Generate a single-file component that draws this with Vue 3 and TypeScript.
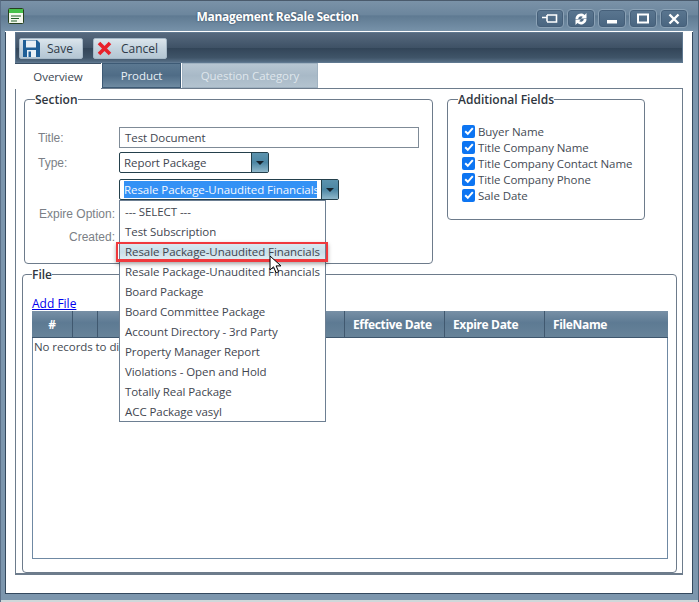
<script setup lang="ts">
const options: string[] = [
  '--- SELECT ---',
  'Test Subscription',
  'Resale Package-Unaudited Financials',
  'Resale Package-Unaudited Financials',
  'Board Package',
  'Board Committee Package',
  'Account Directory - 3rd Party',
  'Property Manager Report',
  'Violations - Open and Hold',
  'Totally Real Package',
  'ACC Package vasyl',
]
const fields: string[] = ['Buyer Name', 'Title Company Name', 'Title Company Contact Name', 'Title Company Phone', 'Sale Date']
const columns: { label: string; width: number }[] = [
  { label: '#', width: 41 },
  { label: '', width: 25 },
  { label: '', width: 247 },
  { label: 'Effective Date', width: 100 },
  { label: 'Expire Date', width: 100 },
  { label: 'FileName', width: 123 },
]
</script>

<template>
  <div class="window">
    <header class="titlebar">
      <svg class="app-icon" width="16" height="16" viewBox="0 0 16 16">
        <rect x="0.5" y="0.5" width="15" height="15" rx="1" fill="#f4f8ee" stroke="#26401f" />
        <rect x="1" y="1" width="14" height="4" fill="#46c04a" />
        <path d="M3 8h10M3 10.5h8M3 13h6" stroke="#23602a" stroke-width="1" />
      </svg>
      <div class="win-title">Management ReSale Section</div>
      <div class="win-buttons">
        <button class="win-btn">
          <svg width="16" height="12" viewBox="0 0 16 12"><path d="M0 4.5h5M5 2v6.5M5 2h9.5v7H5" fill="none" stroke="#fff" stroke-width="1.6" /></svg>
        </button>
        <button class="win-btn">
          <svg width="14" height="14" viewBox="0 0 14 14"><path d="M1.5 7A5.5 5.5 0 0 1 10.6 2.9L12.5 1v5.5H7l1.8-1.8A3 3 0 0 0 4.2 7zM12.5 7A5.5 5.5 0 0 1 3.4 11.1L1.5 13V7.5H7L5.2 9.3A3 3 0 0 0 9.8 7z" fill="#fff" /></svg>
        </button>
        <button class="win-btn">
          <svg width="12" height="12" viewBox="0 0 12 12"><rect x="1" y="7" width="10" height="3.5" fill="#fff" /></svg>
        </button>
        <button class="win-btn">
          <svg width="12" height="12" viewBox="0 0 12 12"><rect x="1" y="1.5" width="10" height="8" fill="none" stroke="#fff" stroke-width="2" /></svg>
        </button>
        <button class="win-btn">
          <svg width="12" height="12" viewBox="0 0 12 12"><path d="M1.5 1.5l9 9M10.5 1.5l-9 9" stroke="#fff" stroke-width="2.4" /></svg>
        </button>
      </div>
    </header>

    <div class="frame">
      <div class="toolbar">
        <button class="tool-btn save">
          <svg width="17" height="17" viewBox="0 0 17 17">
            <path d="M0 0h14l3 3v14H0z" fill="#1f5f97" />
            <rect x="3" y="0.5" width="10" height="7" fill="#e8f0f6" />
            <rect x="4" y="10" width="9" height="7" fill="#e8f0f6" />
            <rect x="5.5" y="11.5" width="2.5" height="5.5" fill="#1f5f97" />
          </svg>
          <span>Save</span>
        </button>
        <button class="tool-btn cancel">
          <svg width="15" height="15" viewBox="0 0 15 15"><path d="M2 2l11 11M13 2L2 13" stroke="#e8202a" stroke-width="3.6" /></svg>
          <span>Cancel</span>
        </button>
      </div>

      <nav class="tabs">
        <div class="tab active">Overview</div>
        <div class="tab dark">Product</div>
        <div class="tab muted">Question Category</div>
      </nav>

      <main class="pane">
        <div class="top-row">
          <fieldset class="group section">
            <legend>Section</legend>
            <div class="form">
              <div class="row r-title">
                <label class="lbl">Title:</label>
                <div class="text-input">Test Document</div>
              </div>
              <div class="row r-type">
                <label class="lbl">Type:</label>
                <div class="combo type-combo">
                  <span class="combo-text">Report Package</span>
                  <span class="combo-btn"><i></i></span>
                </div>
              </div>
              <div class="row r-sub">
                <span class="lbl"></span>
                <div class="combo sub-combo">
                  <span class="combo-text"><span class="selected">Resale Package-Unaudited Financials</span></span>
                  <span class="combo-btn"><i></i></span>
                </div>
              </div>
              <div class="row r-expire"><label class="lbl right">Expire Option:</label></div>
              <div class="row r-created"><label class="lbl right">Created:</label></div>
            </div>
          </fieldset>

          <fieldset class="group additional">
            <legend>Additional Fields</legend>
            <div class="checks">
              <label v-for="f in fields" :key="f" class="check">
                <span class="box">
                  <svg width="12" height="12" viewBox="0 0 12 12"><path d="M2.2 6.2l2.6 2.6 5-5.6" fill="none" stroke="#fff" stroke-width="2" /></svg>
                </span>
                <span>{{ f }}</span>
              </label>
            </div>
          </fieldset>
        </div>

        <fieldset class="group file">
          <legend>File</legend>
          <a class="add-file" href="#">Add File</a>
          <div class="grid">
            <div class="grid-head">
              <div v-for="(c, i) in columns" :key="i" class="th" :class="{ center: c.label === '#' }" :style="{ width: c.width + 'px' }">{{ c.label }}</div>
            </div>
            <div class="empty">No records to display.</div>
          </div>
        </fieldset>
      </main>

      <ul class="dropdown">
        <li v-for="(o, i) in options" :key="i" :class="{ hover: i === 2 }">{{ o }}</li>
      </ul>
      <div class="callout"></div>
      <svg class="cursor" width="15" height="19" viewBox="0 0 15 19">
        <path d="M1 1v14l3.5-3.2 2.6 6 2.6-1.1-2.6-5.8H12z" fill="#fff" stroke="#000" stroke-width="1" />
      </svg>
    </div>
    <div class="strip"></div>
  </div>
</template>

<style>
html, body { margin: 0; padding: 0; background: #7c96ad; overflow: hidden; }
</style>

<style scoped>
* { box-sizing: border-box; }
.window {
  width: 699px;
  height: 602px;
  display: flex;
  flex-direction: column;
  font-family: "Open Sans", "Noto Sans", sans-serif;
  font-size: 11.5px;
  letter-spacing: -0.07px;
  color: #3f4650;
  background: #7c96ad;
  border-top: 1px solid #4a5a6c;
  border-left: 1px solid #5b7088;
  border-right: 1px solid #4d6278;
}
.titlebar {
  height: 30px;
  flex: none;
  position: relative;
  display: flex;
  align-items: center;
  justify-content: center;
  padding-right: 144px;
  background: linear-gradient(#7a92a8 0, #6c869d 45%, #5f7a92 50%, #7792a9 100%);
}
.app-icon { position: absolute; left: 7px; top: 7px; }
.win-title {
  font-weight: 700;
  font-size: 12px;
  letter-spacing: -0.3px;
  color: #fff;
  text-shadow: 0 0 2px #33465a;
}
.win-buttons {
  position: absolute;
  right: 10px;
  top: 8px;
  display: flex;
  gap: 3px;
}
.win-btn {
  width: 28px;
  height: 19px;
  padding: 0;
  display: flex;
  align-items: center;
  justify-content: center;
  border: 1px solid #8ba2b6;
  border-radius: 4px;
  background: linear-gradient(#5a7690, #496580);
  box-shadow: inset 0 0 0 1px #46607a;
}
.frame {
  position: relative;
  flex: none;
  height: 563px;
  margin: 0 5px 0 4px;
  background: #fff;
  border-top: 1px solid #fff;
  border-bottom: 1px solid #34495e;
  padding: 0 10px;
  display: flex;
  flex-direction: column;
  box-shadow: inset 1px 0 0 #34495e, inset -1px 0 0 #34495e;
}
.strip { flex: 1; border-bottom: 2px solid #cfd8da; }
.toolbar {
  height: 31px;
  flex: none;
  display: flex;
  align-items: center;
  gap: 10px;
  padding: 1px 3px 0;
  border: 1px solid #5f7890;
  background: linear-gradient(#56697e 0, #3f5266 50%, #324558 52%, #3f5468 85%, #566e85 100%);
}
.tool-btn {
  height: 21px;
  display: flex;
  align-items: center;
  padding: 0 5px 0 3px;
  border: 1px solid #a5b8c7;
  border-radius: 2px;
  background: linear-gradient(#dbe5ec, #c4d3de 50%, #b4c6d3);
  font-family: inherit;
  font-size: 12px;
  color: #2e3a48;
}
.save { width: 64px; gap: 7px; }
.cancel { width: 74px; gap: 9px; }
.tabs {
  height: 26px;
  flex: none;
  display: flex;
  align-items: flex-end;
  gap: 1px;
  border-bottom: 1px solid #6d7c8c;
}
.tab {
  height: 25px;
  display: flex;
  align-items: center;
  justify-content: center;
}
.tab.active {
  width: 86px;
  height: 26px;
  background: #fff;
  margin-bottom: -1px;
  border-top: 1px solid #3d5166;
  color: #3a4652;
}
.tab.dark {
  width: 79px;
  color: #eaf0f5;
  border: 1px solid #3d5a75;
  background: linear-gradient(#5b7891, #4f6c86 50%, #6f8ba2);
}
.tab.muted {
  width: 136px;
  color: #dfe6ec;
  border: 1px solid #a0b2c1;
  background: linear-gradient(#b7c6d2, #a8b9c7 50%, #b3c3cf);
}
.pane {
  flex: 1;
  padding: 2px 5px 0 6px;
  display: flex;
  flex-direction: column;
  border-left: 1px solid #6d7c8c;
  border-right: 1px solid #6d7c8c;
  border-bottom: 2px solid #6d7c8c;
  margin-bottom: 19px;
}
.top-row { display: flex; align-items: flex-start; }
.group {
  margin: 0;
  padding: 0;
  min-width: 0;
  border: 1px solid #6d7b8b;
  border-radius: 4px;
}
.group legend {
  margin-left: 10px;
  padding: 0;
  font-weight: 600;
  font-size: 12px;
  letter-spacing: 0;
  line-height: 17px;
  color: #2f3640;
}
.section { width: 409px; height: 173px; margin-left: 2px; }
.additional { width: 198px; height: 129px; margin-left: 14px; }
.form { padding: 19px 13px 0 13px; }
.row { display: flex; align-items: center; }
.lbl {
  width: 81px;
  flex: none;
  font-family: "Liberation Sans", sans-serif;
  font-size: 12px;
  letter-spacing: 0;
  color: #7b7f86;
}
.lbl.right { width: 77px; text-align: right; }
.r-title { height: 21px; }
.r-type { height: 21px; margin-top: 4px; }
.r-sub { height: 21px; margin-top: 6px; }
.r-expire { height: 20px; margin-top: 4px; }
.r-created { height: 20px; margin-top: 3px; }
.text-input {
  width: 300px;
  height: 21px;
  line-height: 19px;
  padding-left: 5px;
  border: 1px solid #7f8b97;
}
.combo {
  height: 21px;
  display: flex;
  border: 1px solid #24404c;
  border-radius: 2px;
}
.type-combo { width: 150px; }
.sub-combo { width: 220px; }
.combo-text {
  flex: 1;
  min-width: 0;
  padding-left: 4px;
  line-height: 19px;
  white-space: nowrap;
  overflow: hidden;
}
.selected {
  display: block;
  width: 193px;
  margin-top: 1px;
  line-height: 17px;
  overflow: hidden;
  background: #3391f5;
  color: #f4f8ff;
}
.combo-btn {
  width: 17px;
  flex: none;
  display: flex;
  align-items: center;
  justify-content: center;
  border-left: 1px solid #24404c;
  background: linear-gradient(#5c93ae, #4c86a3 50%, #8fb8cb);
}
.combo-btn i {
  width: 0;
  height: 0;
  border-left: 4px solid transparent;
  border-right: 4px solid transparent;
  border-top: 4px solid #17242e;
}
.checks {
  padding: 15px 0 0 14px;
  display: flex;
  flex-direction: column;
}
.check { display: flex; align-items: center; height: 16px; gap: 3px; color: #454b55; }
.box {
  width: 13px;
  height: 13px;
  border-radius: 2px;
  background: #0d75f2;
  display: flex;
  align-items: center;
  justify-content: center;
}
.file {
  width: 655px;
  height: 307px;
  margin-top: 2px;
  position: relative;
  padding: 0 9px;
}
.file legend { margin-left: 0; }
.add-file {
  display: block;
  height: 15px;
  margin-top: 13px;
  line-height: 15px;
  color: #0000ee;
  text-decoration: underline;
  font-size: 12px;
  letter-spacing: 0;
}
.grid {
  height: 248px;
  width: 636px;
  border: 1px solid #6f89a3;
  border-top: none;
}
.grid-head {
  height: 27px;
  display: flex;
  margin: 0 -1px;
  background: linear-gradient(#7890a6, #5d7a93 45%, #678399 100%);
  border-bottom: 1px solid #3e566d;
}
.th {
  flex: none;
  border-right: 1px solid #40586f;
  color: #fff;
  font-weight: 700;
  font-size: 12px;
  letter-spacing: -0.35px;
  line-height: 28px;
  padding-left: 8px;
}
.th:last-child { border-right: none; }
.th.center { padding-left: 0; text-align: center; }
.empty { padding: 1px 0 0 1px; color: #444a52; }
.dropdown {
  position: absolute;
  left: 114px;
  top: 168px;
  width: 207px;
  height: 222px;
  margin: 0;
  padding: 1px 0 0;
  list-style: none;
  background: #fff;
  border: 1px solid #6d7f92;
}
.dropdown li {
  height: 20px;
  line-height: 20px;
  padding-left: 5px;
  white-space: nowrap;
}
.dropdown li.hover { background: linear-gradient(#dcebf2, #c9dfe9 50%, #e6f1f5); }
.callout {
  position: absolute;
  left: 111px;
  top: 210px;
  width: 212px;
  height: 20px;
  border: 2px solid #f0393d;
  border-bottom-width: 3px;
  box-shadow: 0 2px 4px rgba(0, 0, 0, 0.35);
}
.cursor { position: absolute; left: 264px; top: 223px; }
</style>
